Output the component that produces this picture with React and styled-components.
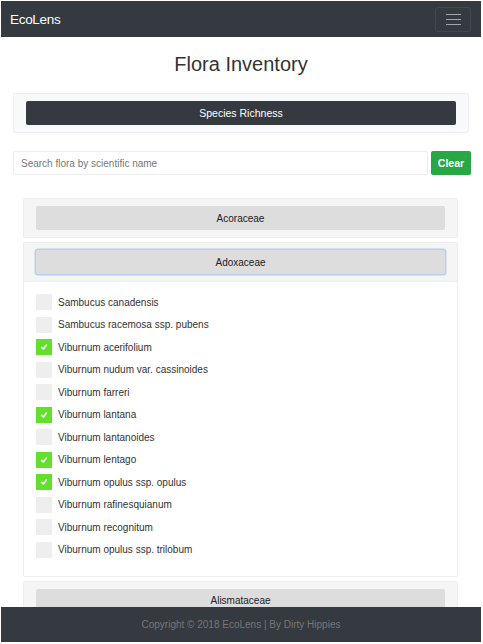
import React from "react"
import styled, { createGlobalStyle } from "styled-components"

const Global = createGlobalStyle`
    html, body {
        margin: 0;
        padding: 0;
        background: #fff;
    }
    body {
        font-family: "Liberation Sans", Arial, sans-serif;
        color: #333;
    }
    #root {
        padding: 1px 2px 40px 1px;
    }
`

const Nav = styled.nav`
    background-color: #343a40;
    height: 36px;
    display: flex;
    align-items: center;
    justify-content: space-between;
    padding: 0 10px 0 9px;
`

const Brand = styled.a`
    color: #fff;
    font-size: 13.5px;
    letter-spacing: -0.3px;
`

const Toggler = styled.button`
    width: 36px;
    height: 25px;
    background: transparent;
    border: 1px solid rgba(255, 255, 255, 0.08);
    border-radius: 3px;
    display: flex;
    flex-direction: column;
    align-items: center;
    justify-content: center;
    gap: 4px;
    padding: 0;
`

const Bar = styled.span`
    display: block;
    width: 15px;
    height: 1px;
    background: rgba(255, 255, 255, 0.55);
`

const Main = styled.main`
    padding: 0 12px;
`

const Titulo = styled.h1`
    font-size: 20px;
    font-weight: 400;
    text-align: center;
    margin: 16px 0 17px;
    color: #333;
`

const Painel = styled.div`
    background: #f8f9fa;
    border: 1px solid #eee;
    border-radius: 2px;
    padding: 7px 12px;
`

const BotaoEscuro = styled.button`
    width: 100%;
    height: 24px;
    background: #343a40;
    color: #fff;
    border: none;
    border-radius: 2px;
    font-family: inherit;
    font-size: 10.5px;
    font-weight: 400;
`

const Busca = styled.div`
    display: flex;
    gap: 3px;
    margin: 18px -2px 0 0;
`

const Campo = styled.input`
    flex: 1;
    height: 24px;
    box-sizing: border-box;
    border: 1px solid #eee;
    border-radius: 2px;
    padding: 0 7px;
    font-family: inherit;
    font-size: 10px;
    &::placeholder {
        color: #777;
    }
`

const Limpar = styled.button`
    width: 40px;
    height: 24px;
    background: #28a745;
    color: #fff;
    border: none;
    border-radius: 2px;
    font-family: inherit;
    font-size: 10.5px;
    font-weight: 700;
`

const Acordeao = styled.div`
    margin: 23px 11px 0 10px;
    display: flex;
    flex-direction: column;
    gap: 4px;
`

const Cartao = styled.div`
    border: 1px solid #eee;
    border-radius: 2px;
    background: #fff;
`

const Cabecalho = styled.div`
    background: #f5f5f5;
    padding: 7px 12px;
    border-bottom: ${p => (p.$open ? "1px solid #eee" : "none")};
`

const BotaoFamilia = styled.button`
    width: 100%;
    height: 24px;
    background: #ddd;
    color: #222;
    border: none;
    border-radius: 2px;
    font-family: inherit;
    font-size: 10px;
    box-shadow: ${p => (p.$focus ? "0 0 0 1.5px #b7d0f0" : "none")};
`

const Lista = styled.ul`
    list-style: none;
    margin: 0;
    padding: 12px 12px 18px;
    display: flex;
    flex-direction: column;
    gap: 6.5px;
`

const Item = styled.li`
    display: flex;
    align-items: center;
    gap: 6px;
    height: 16px;
    font-size: 10px;
    color: #333;
`

const Caixa = styled.span`
    width: 16px;
    height: 16px;
    background: ${p => (p.$on ? "#62e02b" : "#eee")};
    display: flex;
    align-items: center;
    justify-content: center;
`

const Rodape = styled.footer`
    position: fixed;
    left: 1px;
    right: 2px;
    bottom: 2px;
    height: 35px;
    background: #343a40;
    color: #777;
    font-size: 10px;
    display: flex;
    align-items: center;
    justify-content: center;
`

const especies = [
    ["Sambucus canadensis", false],
    ["Sambucus racemosa ssp. pubens", false],
    ["Viburnum acerifolium", true],
    ["Viburnum nudum var. cassinoides", false],
    ["Viburnum farreri", false],
    ["Viburnum lantana", true],
    ["Viburnum lantanoides", false],
    ["Viburnum lentago", true],
    ["Viburnum opulus ssp. opulus", true],
    ["Viburnum rafinesquianum", false],
    ["Viburnum recognitum", false],
    ["Viburnum opulus ssp. trilobum", false],
]

function Check() {
    return (
        <svg width="8" height="8" viewBox="0 0 10 10">
            <path d="M2 5.5 L4.2 7.5 L8 2.5" fill="none" stroke="#fff" strokeWidth="2" strokeLinecap="round" strokeLinejoin="round" />
        </svg>
    )
}

export default function App() {
    return (
        <>
            <Global />
            <Nav>
                <Brand>EcoLens</Brand>
                <Toggler>
                    <Bar />
                    <Bar />
                    <Bar />
                </Toggler>
            </Nav>
            <Main>
                <Titulo>Flora Inventory</Titulo>
                <Painel>
                    <BotaoEscuro>Species Richness</BotaoEscuro>
                </Painel>
                <Busca>
                    <Campo placeholder="Search flora by scientific name" />
                    <Limpar>Clear</Limpar>
                </Busca>
                <Acordeao>
                    <Cartao>
                        <Cabecalho>
                            <BotaoFamilia>Acoraceae</BotaoFamilia>
                        </Cabecalho>
                    </Cartao>
                    <Cartao>
                        <Cabecalho $open>
                            <BotaoFamilia $focus>Adoxaceae</BotaoFamilia>
                        </Cabecalho>
                        <Lista>
                            {especies.map(([nome, on]) => (
                                <Item key={nome}>
                                    <Caixa $on={on}>{on && <Check />}</Caixa>
                                    {nome}
                                </Item>
                            ))}
                        </Lista>
                    </Cartao>
                    <Cartao>
                        <Cabecalho>
                            <BotaoFamilia>Alismataceae</BotaoFamilia>
                        </Cabecalho>
                    </Cartao>
                </Acordeao>
            </Main>
            <Rodape>Copyright © 2018 EcoLens | By Dirty Hippies</Rodape>
        </>
    )
}
